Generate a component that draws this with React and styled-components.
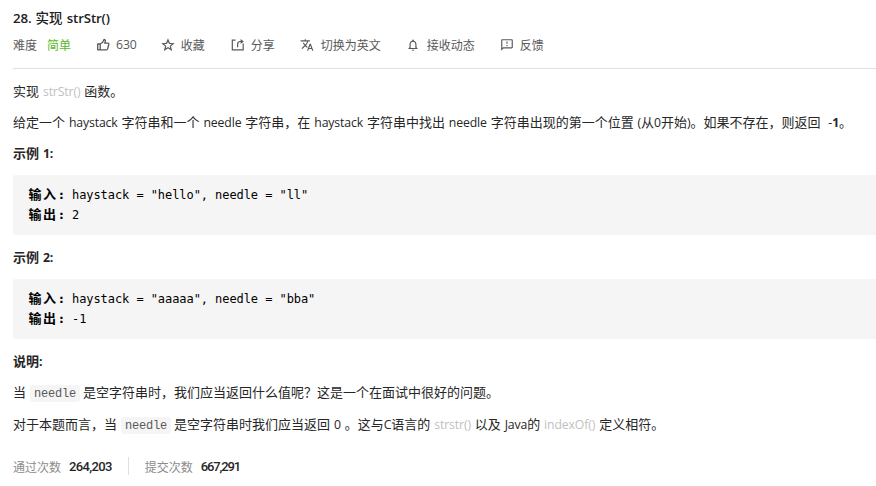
import React from "react";
import styled, { createGlobalStyle } from "styled-components";
import { MdTranslate, MdNotificationsNone, MdOutlineFeedback } from "react-icons/md";

const GlobalStyle = createGlobalStyle`
  body {
    margin: 0;
    background: #fff;
    color: #262626;
    font-family: "Noto Sans CJK SC", sans-serif;
    font-size: 13px;
    overflow: hidden;
  }
`;

const Page = styled.main`
  display: flex;
  flex-direction: column;
  height: 486px;
  padding-left: 13px;
  box-sizing: border-box;
  white-space: nowrap;
`;

const Latin = styled.span`
  font-family: "Open Sans", "Noto Sans CJK SC", sans-serif;
  font-size: 12.25px;
  letter-spacing: -0.13px;
  word-spacing: 0.85px;
  line-height: 1;
  white-space: pre;
`;

const Title = styled.h1`
  height: 20px;
  margin: 7px 0 0;
  font-size: 13.5px;
  font-weight: 500;
  line-height: 20px;
  color: #212121;
  ${Latin} { font-weight: 600; font-size: 13.3px; letter-spacing: -0.15px; }
`;

const Meta = styled.div`
  display: flex;
  align-items: center;
  height: 20px;
  margin-top: 8px;
  padding-bottom: 13px;
  border-bottom: 1px solid #e0e0e0;
  font-size: 12px;
  line-height: 20px;
  color: #595959;
`;

const Difficulty = styled.span`
  margin-left: 10px;
  color: #5ab726;
`;

const Action = styled.span`
  display: flex;
  align-items: center;
  margin-left: ${(p) => p.$before}px;
  svg {
    width: 14px;
    height: 14px;
    margin-right: ${(p) => p.$gap}px;
  }
`;

const Paragraph = styled.p`
  height: 20px;
  margin: ${(p) => p.$top}px 0 0;
  line-height: 20px;
`;

const Heading = styled(Paragraph)`
  font-weight: 700;
  ${Latin} { font-weight: 700; }
`;

const Muted = styled(Latin)`
  color: #bfbfbf;
`;

const CodeBlock = styled.pre`
  margin: 12px 0 0;
  height: 60px;
  box-sizing: border-box;
  padding: 10px 15px;
  border-radius: 3px 0 0 3px;
  background: #f5f5f5;
  color: #000;
  font-family: "DejaVu Sans Mono", "Noto Sans CJK SC", monospace;
  font-size: 12px;
  letter-spacing: -0.07px;
  line-height: 20px;
`;

const CodeLine = styled.div`
  display: flex;
  height: 20px;
`;

const CodeLabel = styled.b`
  width: 43.5px;
  padding-left: 0.5px;
  font-family: "DejaVu Sans Mono", "Noto Sans CJK SC", monospace;
  font-size: 13px;
  letter-spacing: 1.5px;
`;

const InlineCode = styled.code`
  display: inline-block;
  height: 17px;
  margin: 0 3px 0 4px;
  padding: 0 4px;
  border-radius: 3px;
  background: #f5f5f5;
  color: #595959;
  font-family: "Liberation Mono", monospace;
  font-size: 12px;
  letter-spacing: -0.2px;
  line-height: 18px;
`;

const Stats = styled.div`
  display: flex;
  align-items: center;
  height: 18px;
  margin-top: 23px;
  font-size: 12px;
  color: #8c8c8c;
`;

const Count = styled.span`
  margin-left: ${(p) => p.$before}px;
  color: #262626;
  font-family: Roboto, sans-serif;
  font-size: 13px;
  font-weight: 500;
  letter-spacing: ${(p) => p.$tracking}px;
`;

const Divider = styled.i`
  width: 1px;
  height: 18px;
  margin: 0 16px;
  background: #e0e0e0;
`;

const ThumbIcon = () => (
  <svg viewBox="0 0 14 14" fill="none" stroke="currentColor" strokeWidth="1.3" strokeLinejoin="round">
    <path d="M4.2 6H1.7v5.8h2.5zM4.2 6l2.5-1.8L8 1.5c1.3 0 1.6 1.1 1.2 2.2l-.5 1.5h3.1c.9 0 1.2.6 1 1.3l-1.2 4.3c-.2.7-.6 1-1.3 1H4.2" />
  </svg>
);

const StarIcon = () => (
  <svg viewBox="0 0 14 14" fill="none" stroke="currentColor" strokeWidth="1.2" strokeLinejoin="miter">
    <path d="M7 1.9l1.45 3.45 3.75.3-2.85 2.45.9 3.65L7 9.8l-3.25 1.95.9-3.65L1.8 5.65l3.75-.3z" />
  </svg>
);

const ShareIcon = () => (
  <svg viewBox="0 0 14 14" fill="none" stroke="currentColor" strokeWidth="1.2">
    <path d="M4.5 2.1H1.3v9.8h10.9V5.4M6.6 9.2V6.5c0-1.8.8-3 2.6-3h1.2" />
    <path d="M9.6 1l3.2 2.5-3.2 2.5z" fill="currentColor" stroke="none" />
  </svg>
);

const Example = ({ input, output }) => (
  <CodeBlock>
    <CodeLine><CodeLabel>输入:</CodeLabel>{input}</CodeLine>
    <CodeLine><CodeLabel>输出:</CodeLabel>{output}</CodeLine>
  </CodeBlock>
);

export default function App() {
  return (
    <>
      <GlobalStyle />
      <Page>
        <Title><Latin>28. </Latin>实现<Latin> strStr()</Latin></Title>
        <Meta>
          难度<Difficulty>简单</Difficulty>
          <Action $before={25} $gap={6}><ThumbIcon /><Latin>630</Latin></Action>
          <Action $before={24} $gap={6}><StarIcon />收藏</Action>
          <Action $before={26} $gap={6}><ShareIcon />分享</Action>
          <Action $before={25} $gap={7}><MdTranslate />切换为英文</Action>
          <Action $before={25} $gap={7}><MdNotificationsNone />接收动态</Action>
          <Action $before={25} $gap={6}><MdOutlineFeedback />反馈</Action>
        </Meta>
        <Paragraph $top={12}>实现<Muted> strStr() </Muted>函数。</Paragraph>
        <Paragraph $top={11}>
          给定一个<Latin> haystack </Latin>字符串和一个<Latin> needle </Latin>字符串，在
          <Latin> haystack </Latin>字符串中找出<Latin> needle </Latin>字符串出现的第一个位置
          <Latin> (</Latin>从<Latin>0</Latin>开始<Latin>)</Latin>。如果不存在，则返回
          <Latin>{"  "}-<b>1</b></Latin>。
        </Paragraph>
        <Heading $top={11}>示例<Latin> 1:</Latin></Heading>
        <Example input={'haystack = "hello", needle = "ll"'} output="2" />
        <Heading $top={12}>示例<Latin> 2:</Latin></Heading>
        <Example input={'haystack = "aaaaa", needle = "bba"'} output="-1" />
        <Heading $top={12}>说明<Latin>:</Latin></Heading>
        <Paragraph $top={11}>
          当<InlineCode>needle</InlineCode>是空字符串时，我们应当返回什么值呢？这是一个在面试中很好的问题。
        </Paragraph>
        <Paragraph $top={12}>
          对于本题而言，当<InlineCode>needle</InlineCode>是空字符串时我们应当返回
          <Latin> 0 </Latin>。这与<Latin>C</Latin>语言的<Muted> strstr() </Muted>以及
          <Latin> Java</Latin>的<Muted> indexOf() </Muted>定义相符。
        </Paragraph>
        <Stats>
          通过次数<Count $before={8} $tracking={-0.65}>264,203</Count>
          <Divider />
          提交次数<Count $before={8} $tracking={-1.15}>667,291</Count>
        </Stats>
      </Page>
    </>
  );
}
